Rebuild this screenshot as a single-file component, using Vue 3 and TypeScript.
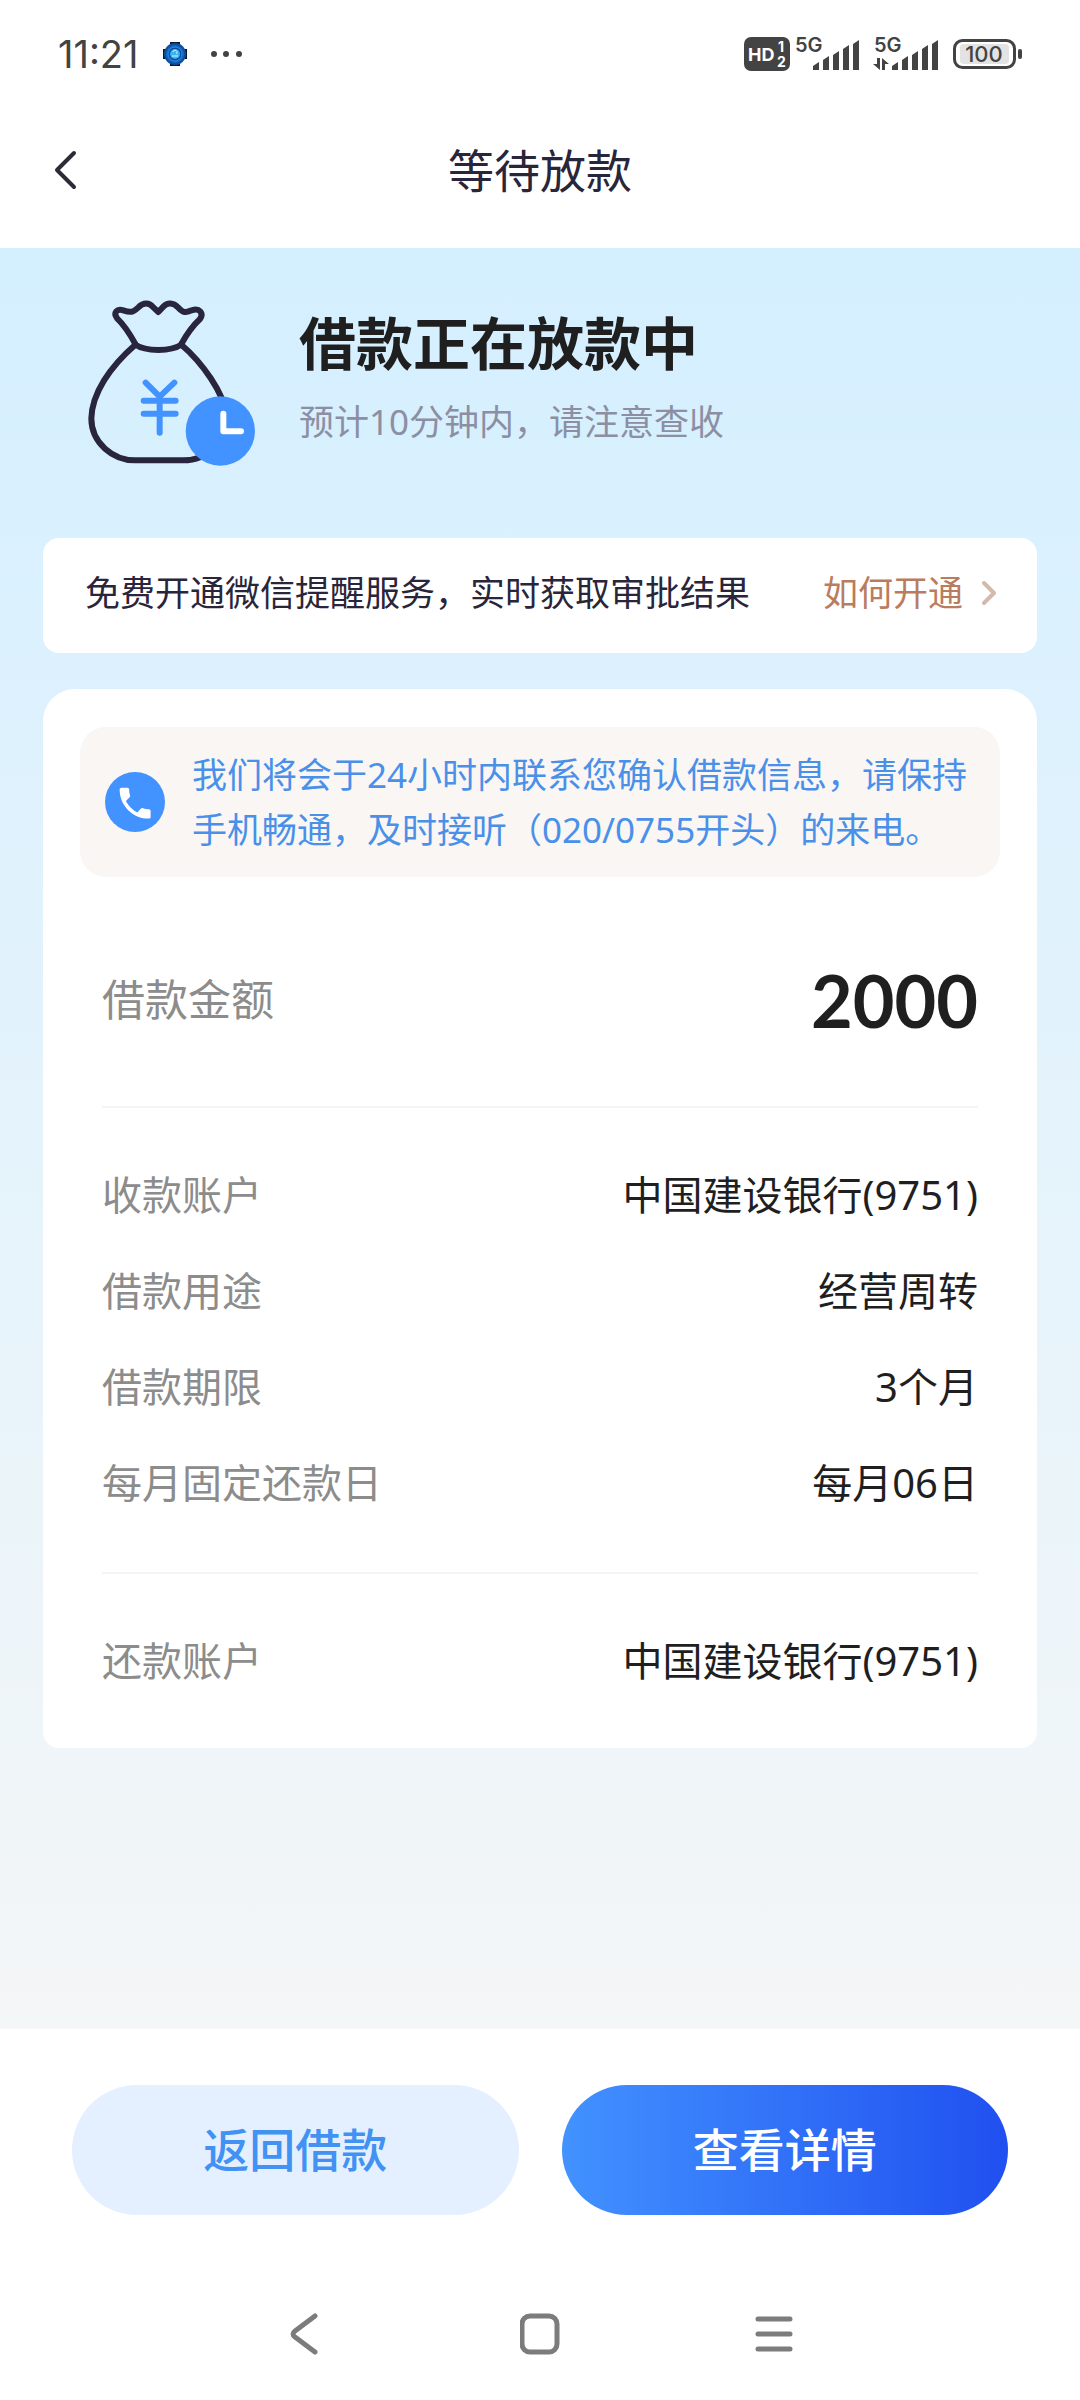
<script setup lang="ts">
interface Detail {
  label: string
  value: string
}

const account: string = '中国建设银行(9751)'

const loanDetails: Detail[] = [
  { label: '收款账户', value: account },
  { label: '借款用途', value: '经营周转' },
  { label: '借款期限', value: '3个月' },
  { label: '每月固定还款日', value: '每月06日' },
]

const repayDetails: Detail[] = [{ label: '还款账户', value: account }]

const groups: Detail[][] = [loanDetails, repayDetails]

// Signal strength columns with slanted tops: x position and top edge
const bars: { x: number; y: number }[] = [
  { x: 69, y: 28 },
  { x: 79, y: 22 },
  { x: 89, y: 17 },
  { x: 99, y: 11 },
  { x: 109, y: 6 },
]

const barPath: string = bars
  .map(({ x, y }) => `M${x} ${y + 4}L${x + 6} ${y}V36H${x}Z`)
  .join('')
</script>

<template>
  <div class="page">
    <div class="status">
      <div class="status-left">
        <time class="clock">11:21</time>
        <svg width="24" height="24" viewBox="0 0 24 24" aria-hidden="true">
          <path d="M7 0H17V24H7ZM0 7H24V17H0Z" fill="#0a1a33" />
          <circle cx="12" cy="12" r="11" fill="#0d4f9e" />
          <circle cx="12" cy="12" r="9" fill="#1268c4" />
          <circle cx="12" cy="12" r="7" fill="#0b4a9c" stroke="#2f8fe6" stroke-width="1" />
          <circle cx="12" cy="12" r="5" fill="#35b4f5" />
          <path d="M10 10a2 2 0 1 1 3 2M9 14h6" fill="none" stroke="#d8f6ff" stroke-width="1" />
        </svg>
        <svg width="32" height="6" viewBox="0 0 32 6" fill="#434343" aria-hidden="true">
          <circle cx="3" cy="3" r="3" />
          <circle cx="15" cy="3" r="3" />
          <circle cx="28" cy="3" r="3" />
        </svg>
      </div>
      <svg class="status-right" width="280" height="40" viewBox="0 0 280 40" fill="#434343">
        <rect x="0" y="3" width="46" height="34" rx="7" />
        <text x="4" y="27" font-size="18" font-weight="700" fill="#fff">HD</text>
        <text x="34" y="18" font-size="14" font-weight="700" fill="#fff">1</text>
        <text x="33" y="33" font-size="14" font-weight="700" fill="#fff">2</text>
        <g>
          <text x="51" y="18" font-size="20" font-weight="600">5G</text>
          <path :d="barPath" />
        </g>
        <g transform="translate(79 0)">
          <text x="51" y="18" font-size="20" font-weight="600">5G</text>
          <path d="M54 24H57V36L50 30H54ZM59 36V24L66 30H62V36Z" />
          <path :d="barPath" />
        </g>
        <rect x="210.500" y="6.500" width="60" height="27" rx="8" fill="#fff" stroke="#434343" stroke-width="3" />
        <rect x="216" y="10" width="49" height="20" rx="4" fill="#e3e3e3" />
        <text x="240" y="28" font-size="22" font-weight="500" text-anchor="middle">100</text>
        <rect x="274" y="15" width="4" height="10" rx="2" />
      </svg>
    </div>

    <header class="header">
      <button class="back" type="button" aria-label="返回">
        <svg width="24" height="40" viewBox="0 0 24 40" fill="none" stroke="#2d2b38" stroke-width="4" stroke-linecap="round" stroke-linejoin="round">
          <path d="M20 3L3 20L20 37" />
        </svg>
      </button>
      <h1>等待放款</h1>
    </header>

    <main class="content">
      <section class="hero">
        <svg width="168" height="167" viewBox="84 60 504 501" fill="none" stroke="#29253f" stroke-width="18" stroke-linecap="round" stroke-linejoin="round" aria-hidden="true">
          <path d="M226 192C206 155 195 138 172 116C158 97 171 85 190 91C213 99 219 97 235 82C251 66 268 68 280 82L295 96L310 80C323 66 340 68 354 82C370 99 377 99 395 91C419 83 432 99 420 117C396 139 384 156 364 192" />
          <path d="M226 194C256 215 334 215 364 194" />
          <path d="M226 194C150 260 96 340 94 415C94 490 160 541 225 541H370C440 541 500 490 498 400C490 340 430 250 364 194" />
          <circle cx="481" cy="453" r="104" fill="#4292ff" stroke="none" />
          <path d="M490 401V454H543" stroke="#fff" />
          <path d="M257 308L299 350L343 308M251 362H347M251 401H347M299 350V458" stroke="#4292ff" />
        </svg>
        <div class="hero-text">
          <h2>借款正在放款中</h2>
          <p>预计10分钟内，请注意查收</p>
        </div>
      </section>

      <section class="notice">
        <span>免费开通微信提醒服务，实时获取审批结果</span>
        <a href="#">
          如何开通
          <svg width="16" height="26" viewBox="0 0 16 26" fill="none" stroke="#d3baaa" stroke-width="4" stroke-linecap="round" stroke-linejoin="round" aria-hidden="true">
            <path d="M3 3L13 13L3 23" />
          </svg>
        </a>
      </section>

      <section class="card">
        <div class="tip">
          <svg width="60" height="60" viewBox="0 0 60 60" aria-hidden="true">
            <circle cx="30" cy="30" r="30" fill="#4292ff" />
            <path transform="translate(9.500 10.500) scale(1.720)" fill="#fff" d="M6.620 10.790c1.440 2.830 3.760 5.140 6.590 6.590l2.200-2.200c.27-.27.67-.36 1.020-.24 1.120.37 2.330.57 3.570.57.55 0 1 .45 1 1V20c0 .55-.45 1-1 1-9.390 0-17-7.610-17-17 0-.55.45-1 1-1h3.500c.55 0 1 .45 1 1 0 1.250.2 2.450.57 3.570.11.35.03.74-.25 1.020z" />
          </svg>
          <p>我们将会于24小时内联系您确认借款信息，请保持手机畅通，及时接听（020/0755开头）的来电。</p>
        </div>
        <dl class="amount">
          <dt>借款金额</dt>
          <dd>2000</dd>
        </dl>
        <dl v-for="(group, i) in groups" :key="i" class="group">
          <div v-for="item in group" :key="item.label" class="row">
            <dt>{{ item.label }}</dt>
            <dd>{{ item.value }}</dd>
          </div>
        </dl>
      </section>
    </main>

    <footer class="actions">
      <button class="secondary" type="button">返回借款</button>
      <button class="primary" type="button">查看详情</button>
    </footer>

    <nav class="navbar">
      <button type="button" aria-label="后退">
        <svg width="40" height="42" viewBox="0 0 40 42">
          <path d="M30 3L10 18Q6 21 10 24L30 39" />
        </svg>
      </button>
      <button type="button" aria-label="主屏幕">
        <svg width="40" height="42" viewBox="0 0 40 42">
          <rect x="2" y="3" width="35" height="36" rx="8" />
        </svg>
      </button>
      <button type="button" aria-label="最近任务">
        <svg width="40" height="42" viewBox="0 0 40 42">
          <path d="M3 6H35M3 21H35M3 36H35" />
        </svg>
      </button>
    </nav>
  </div>
</template>

<style>
body {
  margin: 0;
}
</style>

<style scoped>
.page {
  display: flex;
  flex-direction: column;
  min-height: 100vh;
  background: #fff;
  color: #1f1f1f;
  font-family: "Noto Sans", "Noto Sans CJK SC", sans-serif;
}

h1,
h2,
p,
dl,
dd {
  margin: 0;
}

svg {
  display: block;
  flex: none;
}

button {
  padding: 0;
  border: 0;
  background: none;
  font-family: inherit;
}

.status {
  display: flex;
  align-items: center;
  justify-content: space-between;
  height: 108px;
  padding: 0 56px 0 58px;
  font-family: Inter, sans-serif;
}

.status-left {
  display: flex;
  align-items: center;
  gap: 24px;
}

.clock {
  color: #434343;
  font-size: 38px;
  line-height: 48px;
}

.header {
  display: grid;
  grid-template-columns: 60px 1fr 60px;
  align-items: center;
  height: 124px;
  padding: 0 54px 16px;
}

h1 {
  color: #29253a;
  font-size: 46px;
  font-weight: 400;
  line-height: 64px;
  text-align: center;
}

.content {
  display: flex;
  flex: 1;
  flex-direction: column;
  padding: 0 43px 60px;
  background: linear-gradient(#d4effe, #dbf1fe 20%, #f4f6f7);
}

.hero {
  display: flex;
  gap: 43px;
  padding: 52px 45px 71px;
}

.hero-text {
  display: flex;
  flex-direction: column;
  gap: 20px;
  padding-top: 8px;
}

h2 {
  font-size: 57px;
  font-weight: 700;
  line-height: 70px;
}

.hero-text p {
  color: #8c8fa3;
  font-size: 35px;
  line-height: 48px;
}

.notice {
  display: flex;
  align-items: center;
  justify-content: space-between;
  padding: 30px 40px 35px 42px;
  border-radius: 16px;
  background: #fff;
  color: #29253a;
  font-size: 35px;
  line-height: 50px;
}

.notice a {
  display: flex;
  align-items: center;
  gap: 18px;
  color: #ba7c5e;
  text-decoration: none;
}

.card {
  margin-top: 36px;
  padding: 38px 37px 0;
  border-radius: 32px 32px 16px 16px;
  background: #fff;
}

.tip {
  display: flex;
  align-items: center;
  gap: 27px;
  padding: 20px 25px;
  border-radius: 26px;
  background: #f9f6f4;
  color: #4a90e9;
  font-size: 35px;
  line-height: 55px;
}

.amount,
.row {
  display: flex;
  align-items: center;
  justify-content: space-between;
}

.amount {
  margin: 0 22px;
  padding: 78px 0 61px;
  line-height: 90px;
}

dt {
  color: #8c8c8c;
}

.amount dt {
  font-size: 43px;
}

.amount dd {
  font-family: Lato, sans-serif;
  font-size: 72px;
  font-weight: 700;
}

.group {
  margin: 0 22px;
  padding: 37px 0 43px;
  border-top: 2px solid #f4f4f4;
  font-size: 40px;
}

.group:last-child {
  padding-bottom: 41px;
}

.row {
  height: 96px;
}

.actions {
  display: flex;
  gap: 43px;
  padding: 56px 72px 53px;
}

.actions button {
  flex: 1;
  height: 130px;
  padding-bottom: 6px;
  border-radius: 65px;
  font-size: 46px;
  font-weight: 500;
}

.secondary {
  background: #e4f0ff;
  color: #4292f4;
}

.primary {
  background: linear-gradient(90deg, #4292ff, #2050f0);
  color: #fff;
}

.navbar {
  display: flex;
  align-items: center;
  justify-content: center;
  gap: 195px;
  height: 132px;
}

.navbar svg {
  fill: none;
  stroke: #7c7c7c;
  stroke-linecap: round;
  stroke-width: 5px;
}
</style>
